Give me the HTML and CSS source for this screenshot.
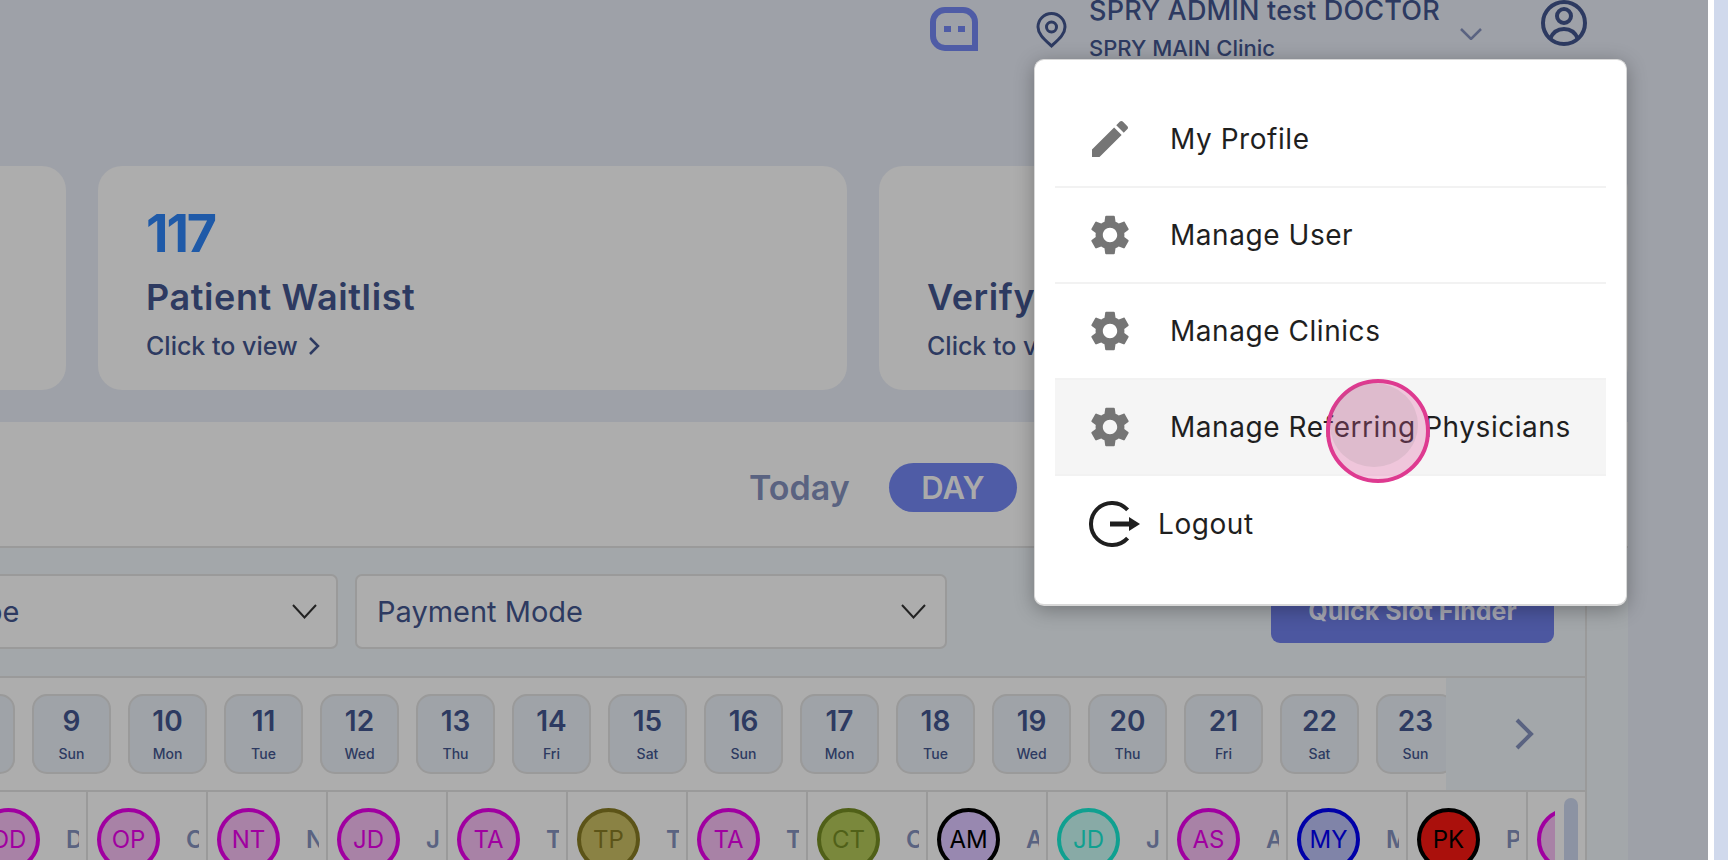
FILE: index.html
```html
<!DOCTYPE html>
<html>
<head>
    <title>SPRY Dashboard</title>
    <meta charset='utf-8'>
    <link rel="stylesheet" href="styles.css">
</head>
<body>
    <div class="main">
        <div class="header">
            <svg class="chat-icon" viewBox="0 0 48 44"><path d="M15 3h18a12 12 0 0 1 12 12v26H15A12 12 0 0 1 3 29V15A12 12 0 0 1 15 3z" fill="none" stroke="#4f5ca6" stroke-width="6"/><rect x="14" y="19" width="7" height="6" fill="#4f5ca6"/><rect x="28" y="19" width="7" height="6" fill="#4f5ca6"/></svg>
            <svg class="pin-icon" viewBox="0 0 31 36"><path d="M15.5 34C8 27 2 22 2 15a13.500 13.500 0 0 1 27 0c0 7-6 12-13.500 19z" fill="none" stroke="#2d3a61" stroke-width="3"/><circle cx="15.500" cy="15" r="5" fill="none" stroke="#2d3a61" stroke-width="3"/></svg>
            <div class="user-text">
                <div class="user-name">SPRY ADMIN test DOCTOR</div>
                <div class="user-clinic">SPRY MAIN Clinic</div>
            </div>
            <svg class="head-chevron" viewBox="0 0 22 12"><path d="M1 1l10 10L21 1" fill="none" stroke="#5a6381" stroke-width="2.500"/></svg>
            <svg class="user-icon" viewBox="0 0 46 46"><circle cx="23" cy="23" r="21" fill="none" stroke="#2d3a61" stroke-width="4"/><circle cx="23" cy="16" r="7" fill="none" stroke="#2d3a61" stroke-width="4"/><path d="M9 39Q13 29 23 29T37 39" fill="none" stroke="#2d3a61" stroke-width="4"/></svg>
        </div>

        <div class="cards">
            <div class="card card-first"></div>
            <div class="card">
                <div class="card-count">117</div>
                <div class="card-title">Patient Waitlist</div>
                <div class="card-link">Click to view <svg class="link-chevron" viewBox="0 0 12 20"><path d="M2 2l8 8-8 8" fill="none" stroke="#2d3a61" stroke-width="2.500"/></svg></div>
            </div>
            <div class="card">
                <div class="card-count"></div>
                <div class="card-title">Verify Insurance</div>
                <div class="card-link">Click to view</div>
            </div>
        </div>

        <div class="panel">
            <div class="panel-top">
                <span class="today">Today</span>
                <span class="day-pill">DAY</span>
            </div>
            <div class="panel-body">
                <div class="schedule">
                    <div class="filters">
                        <div class="select select-first"><span>Appointment Type</span><svg class="select-chevron" viewBox="0 0 25 15"><path d="M1 1l11.500 12.500L24 1" fill="none" stroke="#222" stroke-width="2"/></svg></div>
                        <div class="select select-second"><span>Payment Mode</span><svg class="select-chevron" viewBox="0 0 25 15"><path d="M1 1l11.500 12.500L24 1" fill="none" stroke="#222" stroke-width="2"/></svg></div>
                        <button class="quick-slot">Quick Slot Finder</button>
                    </div>
                    <div class="date-row">
                        <div class="date-list">
                            <div class="date"><b>8</b><span>Sat</span></div>
                            <div class="date"><b>9</b><span>Sun</span></div>
                            <div class="date"><b>10</b><span>Mon</span></div>
                            <div class="date"><b>11</b><span>Tue</span></div>
                            <div class="date"><b>12</b><span>Wed</span></div>
                            <div class="date"><b>13</b><span>Thu</span></div>
                            <div class="date"><b>14</b><span>Fri</span></div>
                            <div class="date"><b>15</b><span>Sat</span></div>
                            <div class="date"><b>16</b><span>Sun</span></div>
                            <div class="date"><b>17</b><span>Mon</span></div>
                            <div class="date"><b>18</b><span>Tue</span></div>
                            <div class="date"><b>19</b><span>Wed</span></div>
                            <div class="date"><b>20</b><span>Thu</span></div>
                            <div class="date"><b>21</b><span>Fri</span></div>
                            <div class="date"><b>22</b><span>Sat</span></div>
                            <div class="date"><b>23</b><span>Sun</span></div>
                        </div>
                        <div class="date-next"><svg viewBox="0 0 20 32"><path d="M3 2l14 14L3 30" fill="none" stroke="#5a6381" stroke-width="4"/></svg></div>
                    </div>
                    <div class="provider-wrap">
                        <div class="providers">
                            <div class="provider"><div class="avatar av-purple">OD</div><div class="provider-name">Dr</div></div>
                            <div class="provider"><div class="avatar av-purple">OP</div><div class="provider-name">Cole</div></div>
                            <div class="provider"><div class="avatar av-purple">NT</div><div class="provider-name">Neil</div></div>
                            <div class="provider"><div class="avatar av-purple">JD</div><div class="provider-name">John</div></div>
                            <div class="provider"><div class="avatar av-purple">TA</div><div class="provider-name">Tara</div></div>
                            <div class="provider"><div class="avatar av-olive">TP</div><div class="provider-name">Tom</div></div>
                            <div class="provider"><div class="avatar av-purple">TA</div><div class="provider-name">Tara</div></div>
                            <div class="provider"><div class="avatar av-green">CT</div><div class="provider-name">Carl</div></div>
                            <div class="provider"><div class="avatar av-lilac">AM</div><div class="provider-name">Amy</div></div>
                            <div class="provider"><div class="avatar av-teal">JD</div><div class="provider-name">John</div></div>
                            <div class="provider"><div class="avatar av-purple">AS</div><div class="provider-name">Anna</div></div>
                            <div class="provider"><div class="avatar av-blue">MY</div><div class="provider-name">Mary</div></div>
                            <div class="provider"><div class="avatar av-red">PK</div><div class="provider-name">Paul</div></div>
                            <div class="provider"><div class="avatar av-purple"></div></div>
                        </div>
                        <div class="scroll-track"><div class="scroll-thumb"></div></div>
                    </div>
                </div>
                <div class="panel-edge"></div>
            </div>
        </div>
    </div>
    <div class="strip-white"></div>
    <div class="strip-blue"></div>

    <div class="menu">
        <div class="menu-item">
            <svg class="menu-icon" viewBox="0 0 24 24"><path d="M3 17.250V21h3.750L17.810 9.940l-3.750-3.750L3 17.250zM20.710 7.040c.39-.39.39-1.020 0-1.410l-2.340-2.340c-.39-.39-1.020-.39-1.410 0l-1.830 1.830 3.750 3.750 1.830-1.830z"/></svg>
            <span>My Profile</span>
        </div>
        <div class="menu-item">
            <svg class="menu-icon" viewBox="0 0 24 24"><path d="M19.140 12.940c.04-.3.06-.61.06-.94 0-.32-.02-.64-.07-.94l2.030-1.580c.18-.14.23-.41.12-.61l-1.920-3.320c-.12-.22-.37-.29-.59-.22l-2.390.96c-.5-.38-1.030-.7-1.620-.94l-.36-2.540c-.04-.24-.24-.41-.48-.41h-3.840c-.24 0-.43.17-.47.41l-.36 2.540c-.59.24-1.130.57-1.620.94l-2.390-.96c-.22-.08-.47 0-.59.22L2.740 8.870c-.12.21-.08.47.12.61l2.030 1.580c-.05.3-.09.63-.09.94s.02.64.07.94l-2.030 1.580c-.18.14-.23.41-.12.61l1.920 3.320c.12.22.37.29.59.22l2.390-.96c.5.38 1.030.7 1.620.94l.36 2.540c.05.24.24.41.48.41h3.840c.24 0 .44-.17.47-.41l.36-2.540c.59-.24 1.130-.56 1.620-.94l2.390.96c.22.08.47 0 .59-.22l1.920-3.320c.12-.22.07-.47-.12-.61l-2.010-1.580zM12 15.600c-1.980 0-3.600-1.620-3.600-3.600s1.620-3.600 3.600-3.600 3.600 1.620 3.600 3.600-1.620 3.600-3.600 3.600z"/></svg>
            <span>Manage User</span>
        </div>
        <div class="menu-item">
            <svg class="menu-icon" viewBox="0 0 24 24"><path d="M19.140 12.940c.04-.3.06-.61.06-.94 0-.32-.02-.64-.07-.94l2.030-1.580c.18-.14.23-.41.12-.61l-1.920-3.320c-.12-.22-.37-.29-.59-.22l-2.390.96c-.5-.38-1.030-.7-1.620-.94l-.36-2.540c-.04-.24-.24-.41-.48-.41h-3.840c-.24 0-.43.17-.47.41l-.36 2.540c-.59.24-1.130.57-1.620.94l-2.390-.96c-.22-.08-.47 0-.59.22L2.740 8.870c-.12.21-.08.47.12.61l2.030 1.580c-.05.3-.09.63-.09.94s.02.64.07.94l-2.030 1.580c-.18.14-.23.41-.12.61l1.920 3.320c.12.22.37.29.59.22l2.390-.96c.5.38 1.030.7 1.620.94l.36 2.540c.05.24.24.41.48.41h3.840c.24 0 .44-.17.47-.41l.36-2.540c.59-.24 1.130-.56 1.620-.94l2.390.96c.22.08.47 0 .59-.22l1.920-3.320c.12-.22.07-.47-.12-.61l-2.010-1.580zM12 15.600c-1.980 0-3.600-1.620-3.600-3.600s1.620-3.600 3.600-3.600 3.600 1.620 3.600 3.600-1.620 3.600-3.600 3.600z"/></svg>
            <span>Manage Clinics</span>
        </div>
        <div class="menu-item menu-item-active">
            <svg class="menu-icon" viewBox="0 0 24 24"><path d="M19.140 12.940c.04-.3.06-.61.06-.94 0-.32-.02-.64-.07-.94l2.030-1.580c.18-.14.23-.41.12-.61l-1.920-3.320c-.12-.22-.37-.29-.59-.22l-2.390.96c-.5-.38-1.030-.7-1.620-.94l-.36-2.540c-.04-.24-.24-.41-.48-.41h-3.840c-.24 0-.43.17-.47.41l-.36 2.540c-.59.24-1.130.57-1.620.94l-2.390-.96c-.22-.08-.47 0-.59.22L2.740 8.870c-.12.21-.08.47.12.61l2.030 1.580c-.05.3-.09.63-.09.94s.02.64.07.94l-2.030 1.580c-.18.14-.23.41-.12.61l1.920 3.320c.12.22.37.29.59.22l2.390-.96c.5.38 1.030.7 1.620.94l.36 2.540c.05.24.24.41.48.41h3.840c.24 0 .44-.17.47-.41l.36-2.540c.59-.24 1.130-.56 1.620-.94l2.390.96c.22.08.47 0 .59-.22l1.920-3.320c.12-.22.07-.47-.12-.61l-2.010-1.580zM12 15.600c-1.980 0-3.600-1.620-3.600-3.600s1.620-3.600 3.600-3.600 3.600 1.620 3.600 3.600-1.620 3.600-3.600 3.600z"/></svg>
            <span>Manage Referring Physicians</span>
        </div>
        <div class="menu-item menu-logout">
            <svg class="logout-icon" viewBox="0 0 52 46"><path d="M38.600 8.950A21 21 0 1 0 38.600 37.050" fill="none" stroke="#1f1f1f" stroke-width="4"/><path d="M21 23h20" stroke="#1f1f1f" stroke-width="5"/><path d="M40 16l11 7-11 7z" fill="#1f1f1f"/></svg>
            <span>Logout</span>
        </div>
    </div>

    <div class="click-ring"><div class="click-inner"></div></div>
</body>
</html>
```

FILE: styles.css
```css
body {
    margin: 0;
    height: 860px;
    overflow: hidden;
    display: flex;
    background: #9ea1a8;
    font-family: 'Inter', 'Noto Sans', sans-serif;
    color: #2d3a61;
}
.main {
    width: 1708px;
    flex-shrink: 0;
    height: 860px;
    overflow: hidden;
}
.strip-white {
    width: 6px;
    background: #fff;
}
.strip-blue {
    width: 14px;
    background: #d0d9ec;
}
.header {
    height: 166px;
    box-sizing: border-box;
    display: flex;
    justify-content: flex-end;
    align-items: flex-start;
    padding-right: 121px;
}
.chat-icon {
    width: 48px;
    height: 44px;
    margin-top: 7px;
    margin-right: 58px;
}
.pin-icon {
    width: 31px;
    height: 36px;
    margin-top: 12px;
    margin-right: 22px;
}
.user-text {
    width: 354px;
    margin-top: -7px;
    margin-right: 17px;
    white-space: nowrap;
    font-weight: 500;
}
.user-name {
    font-size: 27px;
    line-height: 36px;
    letter-spacing: 0.2px;
}
.user-clinic {
    font-size: 22px;
    line-height: 30px;
    margin-top: 4px;
}
.head-chevron {
    width: 22px;
    height: 12px;
    margin-top: 28px;
    margin-right: 59px;
}
.user-icon {
    width: 46px;
    height: 46px;
}
.cards {
    display: flex;
    gap: 32px;
    margin-left: -683px;
}
.card {
    width: 749px;
    height: 224px;
    flex-shrink: 0;
    box-sizing: border-box;
    padding: 38px 48px 0;
    background: #adadad;
    border-radius: 24px;
}
.card-count {
    height: 60px;
    font-size: 52px;
    line-height: 60px;
    font-weight: 700;
    color: #1f5aa8;
    letter-spacing: -2px;
}
.card-title {
    margin-top: 11px;
    font-size: 36px;
    line-height: 44px;
    font-weight: 600;
    letter-spacing: 0.6px;
    white-space: nowrap;
}
.card-link {
    margin-top: 9px;
    font-size: 25px;
    line-height: 36px;
    font-weight: 500;
    display: flex;
    align-items: center;
    gap: 10px;
}
.link-chevron {
    width: 12px;
    height: 20px;
}
.panel {
    margin-top: 32px;
    width: 1628px;
}
.panel-top {
    height: 126px;
    box-sizing: border-box;
    padding: 41px 0 0 749px;
    display: flex;
    align-items: flex-start;
    background: #adadad;
    border-bottom: 2px solid #9a9a9a;
}
.today {
    width: 140px;
    font-size: 34px;
    line-height: 49px;
    font-weight: 600;
    color: #5a6381;
}
.day-pill {
    width: 128px;
    height: 49px;
    line-height: 49px;
    text-align: center;
    border-radius: 25px;
    background: #4f5ca6;
    color: #aaa;
    font-size: 31px;
    font-weight: 600;
}
.panel-body {
    display: flex;
    background: #a3a7aa;
}
.schedule {
    width: 1587px;
    height: 312px;
    box-sizing: border-box;
    border-right: 2px solid #9a9a9a;
}
.filters {
    height: 130px;
    box-sizing: border-box;
    padding-top: 26px;
    display: flex;
    align-items: flex-start;
    border-bottom: 2px solid #9a9a9a;
}
.select {
    height: 75px;
    box-sizing: border-box;
    display: flex;
    align-items: center;
    justify-content: space-between;
    padding: 0 19px 0 20px;
    background: #adadad;
    border: 2px solid #9a9a9a;
    border-radius: 7px;
    font-size: 29px;
    white-space: nowrap;
}
.select-first {
    width: 592px;
    margin-left: -254px;
}
.select-second {
    width: 592px;
    margin-left: 17px;
}
.select-chevron {
    width: 25px;
    height: 15px;
}
.quick-slot {
    width: 283px;
    height: 65px;
    margin-left: 324px;
    margin-top: 4px;
    padding: 0;
    border: none;
    border-radius: 9px;
    background: #4c57a0;
    color: #a8a9b5;
    font-family: inherit;
    font-size: 25px;
    font-weight: 700;
}
.date-row {
    height: 112px;
    display: flex;
    border-bottom: 2px solid #9a9a9a;
}
.date-list {
    width: 1446px;
    flex-shrink: 0;
    box-sizing: border-box;
    padding: 16px 0 0;
    display: flex;
    gap: 17px;
    overflow: hidden;
    background: #adadad;
}
.date {
    width: 79px;
    height: 80px;
    flex-shrink: 0;
    box-sizing: border-box;
    border: 2px solid #9a9a9a;
    border-radius: 15px;
    background: #9fa3a8;
    text-align: center;
}
.date:first-child {
    margin-left: -64px;
}
.date b {
    display: block;
    margin-top: 7px;
    font-size: 28px;
    line-height: 36px;
    font-weight: 600;
}
.date span {
    display: block;
    margin-top: 5px;
    font-size: 14px;
    line-height: 20px;
    font-weight: 500;
}
.date-next {
    flex: 1;
    display: flex;
    align-items: center;
    justify-content: center;
    padding-left: 17px;
}
.date-next svg {
    width: 20px;
    height: 32px;
}
.provider-wrap {
    height: 70px;
    display: flex;
    background: #adadad;
    overflow: hidden;
}
.providers {
    width: 1555px;
    flex-shrink: 0;
    display: flex;
    overflow: hidden;
}
.provider {
    width: 120px;
    flex-shrink: 0;
    box-sizing: border-box;
    padding: 16px 0 0 9px;
    display: flex;
    align-items: flex-start;
    gap: 26px;
    border-right: 2px solid #9a9a9a;
}
.provider:first-child {
    margin-left: -32px;
}
.avatar {
    width: 63px;
    height: 63px;
    flex-shrink: 0;
    box-sizing: border-box;
    border: 4px solid;
    border-radius: 50%;
    text-align: center;
    font-size: 24px;
    line-height: 55px;
}
.av-purple { border-color: #a000a0; background: #a882a6; color: #a000a0; }
.av-olive { border-color: #5c5418; background: #8a8244; color: #5c5418; }
.av-green { border-color: #506018; background: #7a883c; color: #506018; }
.av-lilac { border-color: #000; background: #9888b0; color: #000; }
.av-teal { border-color: #10a090; background: #88aaa6; color: #10a090; }
.av-blue { border-color: #0000a8; background: #8084a8; color: #0000a8; }
.av-red { border-color: #000; background: #aa100c; color: #000; }
.provider-name {
    width: 13px;
    overflow: hidden;
    font-size: 24px;
    line-height: 63px;
    font-weight: 600;
    color: #5a6381;
}
.scroll-track {
    flex: 1;
    padding: 6px 7px 0 9px;
}
.scroll-thumb {
    height: 100px;
    border-radius: 8px;
    background: #8c93a3;
}
.panel-edge {
    flex: 1;
}

/* profile dropdown, sits over the page */
.menu {
    position: absolute;
    left: 1034px;
    top: 59px;
    width: 593px;
    height: 547px;
    box-sizing: border-box;
    padding: 32px 20px 0;
    background: #fff;
    border-radius: 10px;
    border: 1px solid #d8d8d8;
    border-bottom-width: 2px;
    box-shadow: 0 4px 20px rgba(0, 0, 0, 0.3);
}
.menu-item {
    height: 96px;
    box-sizing: border-box;
    padding-left: 31px;
    display: flex;
    align-items: center;
    gap: 36px;
    border-bottom: 2px solid #f2f2f2;
    font-size: 28px;
    letter-spacing: 0.55px;
    color: #1f1f1f;
    white-space: nowrap;
}
.menu-item-active {
    background: #f5f5f5;
}
.menu-logout {
    border-bottom: none;
    padding-left: 34px;
    gap: 17px;
}
.menu-icon {
    width: 48px;
    height: 48px;
    fill: #757575;
}
.logout-icon {
    width: 52px;
    height: 46px;
}

/* click marker from the screen recorder */
.click-ring {
    position: absolute;
    left: 1326px;
    top: 379px;
    width: 104px;
    height: 104px;
    box-sizing: border-box;
    border: 4px solid #de3a90;
    border-radius: 50%;
    background: rgba(222, 58, 144, 0.25);
}
.click-inner {
    position: absolute;
    left: 0;
    top: 0;
    width: 88px;
    height: 84px;
    border-radius: 50%;
    background: rgba(120, 120, 120, 0.14);
}
```
